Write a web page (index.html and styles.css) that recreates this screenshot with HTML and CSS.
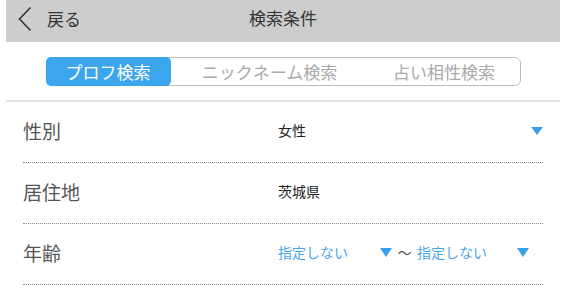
FILE: index.html
```html
<!DOCTYPE html>
<html lang="ja">
<head>
<meta charset="utf-8">
<title>検索条件</title>
<link rel="stylesheet" href="styles.css">
</head>
<body>
<div class="page">
  <header class="header">
    <a class="back">
      <svg class="chev" width="14" height="26" viewBox="0 0 14 26"><path d="M12.5 1.5 L1.5 13 L12.5 24.5" fill="none" stroke="#333" stroke-width="1.6"/></svg>
      <span>戻る</span>
    </a>
    <h1 class="title">検索条件</h1>
  </header>
  <div class="tabs-wrap">
    <div class="tabs">
      <div class="tab tab1 active">プロフ検索</div>
      <div class="tab tab2">ニックネーム検索</div>
      <div class="tab tab3">占い相性検索</div>
    </div>
  </div>
  <div class="form">
    <div class="row">
      <div class="label">性別</div>
      <div class="value select full"><span class="val dark">女性</span><span class="tri"></span></div>
    </div>
    <div class="row">
      <div class="label">居住地</div>
      <div class="value"><span class="val dark">茨城県</span></div>
    </div>
    <div class="row">
      <div class="label">年齢</div>
      <div class="value range">
        <div class="select sel1"><span class="val blue">指定しない</span><span class="tri"></span></div>
        <span class="tilde">〜</span>
        <div class="select sel2"><span class="val blue">指定しない</span><span class="tri"></span></div>
      </div>
    </div>
  </div>
</div>
</body>
</html>
```
FILE: styles.css
```css
* { box-sizing: border-box; }
html, body { margin: 0; padding: 0; background: #fff; }
body { font-family: "Noto Sans CJK JP", "Noto Sans", sans-serif; color: #333; }
.page { margin: 0 7px 0 6px; width: 554px; }
.header {
  position: relative;
  height: 42px;
  background: #cdcdcd;
  display: flex;
  align-items: center;
  justify-content: center;
  padding-bottom: 7px;
}
.back {
  position: absolute;
  left: 12px;
  top: 6px;
  display: flex;
  align-items: center;
  gap: 15px;
  font-size: 17px;
  color: #333;
}
.chev { display: block; }
.back span { line-height: 24px; }
.title { margin: 0; font-size: 17px; font-weight: normal; color: #333; line-height: 24px; }
.tabs-wrap {
  padding: 15px 0 14px;
  display: flex;
  justify-content: center;
  border-bottom: 2px solid #e3e3e3;
}
.tabs {
  display: flex;
  width: 475px;
  height: 29px;
  border: 1px solid #bdbdbd;
  border-radius: 6px;
}
.tab {
  display: flex;
  align-items: center;
  justify-content: center;
  font-size: 17px;
  color: #aaa;
  line-height: 1;
}
.tab1 { width: 125px; }
.tab2 { width: 198px; }
.tab3 { flex: 1; }
.tab.active {
  background: #3ba6ee;
  color: #fff;
  border-radius: 5px;
  margin: -1px 0 -1px -1px;
}
.form { padding: 0 17px; }
.row {
  display: grid;
  grid-template-columns: 255px 1fr;
  align-items: center;
  height: 61px;
  border-bottom: 1px dotted #888;
  padding-bottom: 4px;
}
.label { font-size: 19px; color: #555; line-height: 1; }
.value { display: flex; align-items: center; font-size: 14px; }
.val { line-height: 1; }
.dark { color: #222; }
.blue { color: #4aa6ea; }
.select { display: flex; align-items: center; justify-content: space-between; }
.tri {
  width: 0; height: 0;
  border-left: 6.5px solid transparent;
  border-right: 6.5px solid transparent;
  border-top: 9px solid #399fea;
  margin-top: 1px;
}
.full .tri { border-left-width: 6px; border-right-width: 6px; border-top-width: 8px; }
.range { gap: 0; }
.sel1 { width: 114px; }
.tilde { width: 25px; text-align: center; font-size: 14px; color: #555; line-height: 1; }
.sel2 { width: 112px; }
```
